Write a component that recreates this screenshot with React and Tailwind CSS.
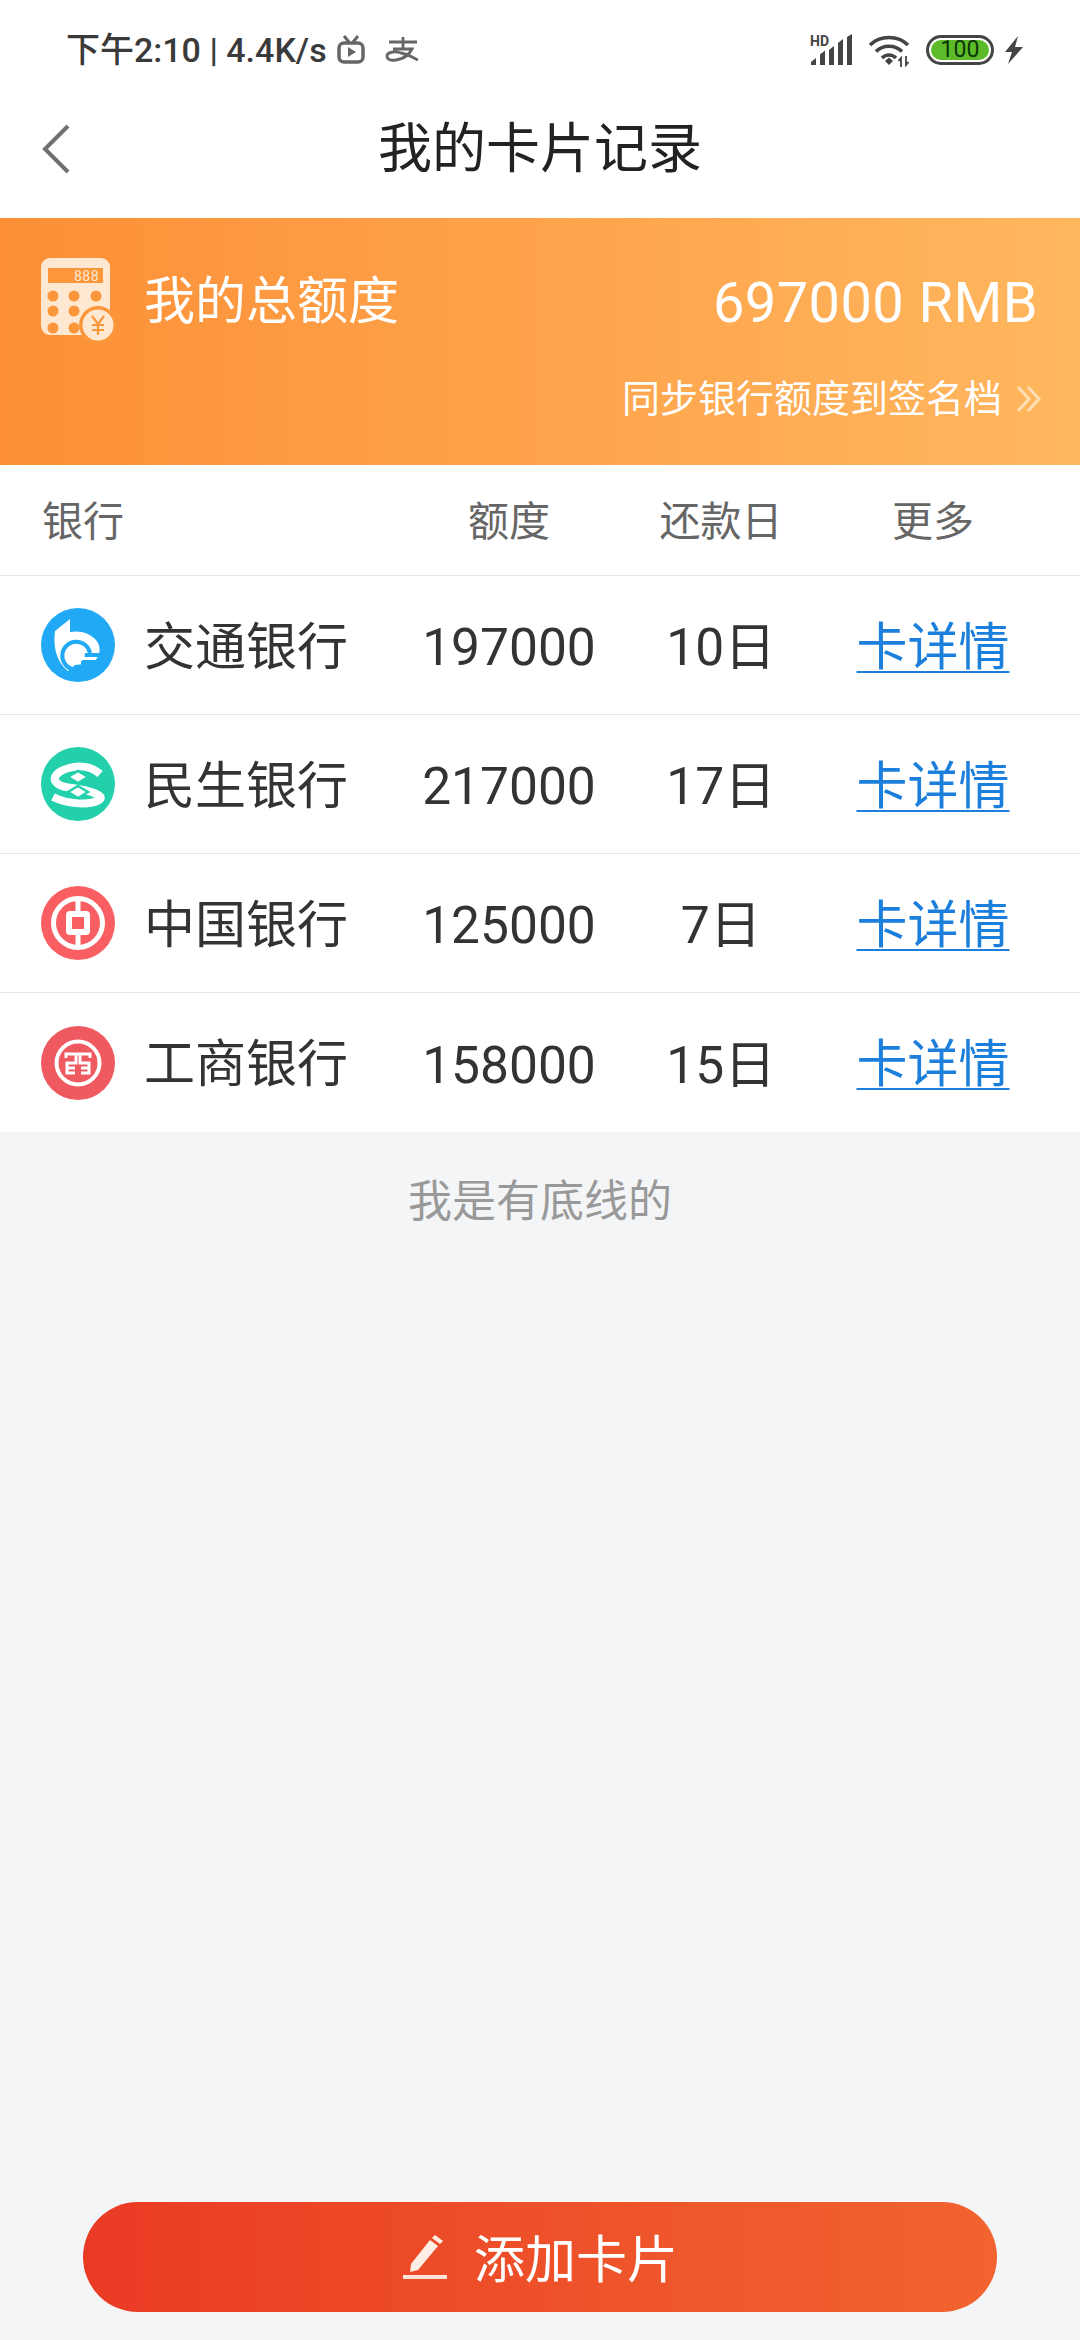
import React from "react";

function StatusRight() {
  return (
    <div className="flex items-center">
      <svg width="44" height="32" viewBox="0 0 44 32">
        <text x="0" y="12" fontSize="14" fontWeight="700" fontFamily="Roboto" fill="#444">HD</text>
        <path d="M1 31v-3l5-4v7zM10 31V20.500l5-4V31zM19 31V16l5-4v19zM28 31V9l5-4v26zM37 31V3l5-3v31z" fill="#444" />
      </svg>
      <svg width="44" height="34" viewBox="0 0 44 34" className="ml-[14px]">
        <path d="M2 12C12 2 30 2 40 12M8 18.500C15 11.500 27 11.500 34 18.500M14 25C18 21 24 21 28 25" fill="none" stroke="#444" strokeWidth="3.500" />
        <path d="M17 28l4-3.500 4 3.500-4 4z" fill="#444" />
        <path d="M33 34v-9l-2.500 3M38 23v9l2.500-3" fill="none" stroke="#444" strokeWidth="1.800" />
      </svg>
      <div className="ml-[14px] w-[68px] h-[30px] rounded-full border-[3px] border-[#444] p-[2px] flex">
        <div className="flex-1 rounded-full bg-[#5dbb2a] flex items-center justify-center text-[23px] leading-none text-[#0b3608] font-[Roboto]">100</div>
      </div>
      <svg width="20" height="30" viewBox="0 0 20 30" className="ml-[10px]">
        <path d="M14 1L1 17h7L4 29 19 12h-8z" fill="#444" />
      </svg>
    </div>
  );
}

function TvIcon() {
  return (
    <svg width="28" height="30" viewBox="0 0 28 30">
      <path d="M7 1l5 6M21 1l-5 6" stroke="#666" strokeWidth="3" fill="none" />
      <rect x="2" y="8" width="24" height="19" rx="5" fill="none" stroke="#666" strokeWidth="3.500" />
      <path d="M11 12l8 5-8 5z" fill="#666" />
    </svg>
  );
}

function CalcIcon() {
  const dots = [
    [14, 38], [35, 38], [57, 38],
    [14, 53], [35, 53],
    [14, 70], [35, 70],
  ];
  return (
    <svg width="78" height="86" viewBox="0 0 78 86">
      <rect x="2" y="0" width="69" height="77" rx="9" fill="#ffe8d2" />
      <rect x="9" y="10" width="55" height="15" fill="#fc963b" />
      <text x="35" y="23" fontSize="14" fontFamily="Roboto" fill="#ffe8d2" letterSpacing="0.5">888</text>
      {dots.map(([x, y]) => (
        <circle key={x + "-" + y} cx={x} cy={y} r="5.500" fill="#fc963b" />
      ))}
      <circle cx="59" cy="67" r="19" fill="#fc963b" />
      <circle cx="59" cy="67" r="15.500" fill="#ffe8d2" />
      <path d="M53 58l6 8 6-8M59 66v11M53 67h12M53 72h12" fill="none" stroke="#fc963b" strokeWidth="2.200" />
    </svg>
  );
}

function BocomIcon() {
  return (
    <svg width="74" height="74" viewBox="0 0 74 74">
      <circle cx="37" cy="37" r="37" fill="#22a9f5" />
      <path d="M29 11L14 23C12 38 15 54 27 63L40 60L54 53C60 46 60 38 55 32C49 25 39 22 29 24Z" fill="#fff" />
      <path d="M27 63L34 57L44 56L54 52L50 66L30 68Z" fill="#22a9f5" />
      <path d="M31 61A14 14 0 1 1 49 45" fill="none" stroke="#22a9f5" strokeWidth="4" />
      <rect x="40" y="45" width="18" height="4" fill="#22a9f5" />
      <rect x="40" y="52" width="16" height="5" fill="#22a9f5" />
      <circle cx="35" cy="46" r="9" fill="#fff" />
      <rect x="40" y="49" width="13" height="3" fill="#fff" />
    </svg>
  );
}

function CmbcIcon() {
  return (
    <svg width="74" height="74" viewBox="0 0 74 74">
      <circle cx="37" cy="37" r="37" fill="#22d1ac" />
      <path d="M59 27C50 19 38 18 28 21C17 24 11 30 15 35C20 42 34 40 47 44C57 47 63 50 58 53C50 58 28 58 12 50" fill="none" stroke="#fff" strokeWidth="8" />
      <path d="M37 24l10 6-10 6-10-6zM37 39l10 6-10 6-10-6z" fill="#fff" stroke="#22d1ac" strokeWidth="2.500" />
    </svg>
  );
}

function BocIcon() {
  return (
    <svg width="74" height="74" viewBox="0 0 74 74">
      <circle cx="37" cy="37" r="37" fill="#f95f62" />
      <circle cx="37" cy="37" r="24.500" fill="none" stroke="#fff" strokeWidth="5" />
      <rect x="28" y="28" width="18" height="18" rx="1" fill="none" stroke="#fff" strokeWidth="6" />
      <path d="M37 12v13M37 49v13" stroke="#fff" strokeWidth="5" />
    </svg>
  );
}

function IcbcIcon() {
  return (
    <svg width="74" height="74" viewBox="0 0 74 74">
      <circle cx="37" cy="37" r="37" fill="#ee5a60" />
      <circle cx="37" cy="37" r="21.500" fill="none" stroke="#fff" strokeWidth="4" />
      <path d="M25 32v-4h24v4M35 28v9H26v10h8M39 28v9h9v10h-8M26 42h8M40 42h8" fill="none" stroke="#fff" strokeWidth="3" />
    </svg>
  );
}

const rows = [
  { name: "交通银行", amount: "197000", day: "10日", Icon: BocomIcon },
  { name: "民生银行", amount: "217000", day: "17日", Icon: CmbcIcon },
  { name: "中国银行", amount: "125000", day: "7日", Icon: BocIcon },
  { name: "工商银行", amount: "158000", day: "15日", Icon: IcbcIcon },
];

export default function App() {
  return (
    <div className="w-[1080px] h-[2340px] bg-[#f4f5f7] flex flex-col font-['Roboto','Noto_Sans_CJK_SC',sans-serif] overflow-hidden">
      <div className="bg-white h-[218px] flex flex-col">
        <div className="h-[92px] pt-[7px] pl-[66px] pr-[56px] flex items-center justify-between">
          <div className="flex items-center text-[#3a3a3a] text-[34px] leading-none font-medium">
            <span>下午2:10 | 4.4K/s</span>
            <span className="ml-[10px] flex"><TvIcon /></span>
            <svg width="36" height="28" viewBox="0 0 36 28" className="ml-[20px]">
              <path d="M4 6h28M18 1v12M8 13h19c-3 6-9 10-16 11-6 1-9-1-9-4 0-4 8-5 14-3 6 1 11 4 17 7" fill="none" stroke="#666" strokeWidth="2.800" />
            </svg>
          </div>
          <StatusRight />
        </div>
        <div className="relative h-[126px] pb-[10px] flex items-center justify-center">
          <svg width="30" height="50" viewBox="0 0 30 50" className="absolute left-[42px] top-[32px]">
            <path d="M26 2L3 25l23 23" fill="none" stroke="#707070" strokeWidth="4" />
          </svg>
          <h1 className="text-[54px] leading-none text-[#222] font-normal">我的卡片记录</h1>
        </div>
      </div>

      <div className="h-[247px] pl-[39px] pr-[42px] pt-[40px] bg-gradient-to-r from-[#fc8f36] to-[#ffb75e] text-white">
        <div className="flex items-center justify-between h-[86px]">
          <div className="flex items-center">
            <CalcIcon />
            <span className="ml-[27px] text-[51px] leading-none">我的总额度</span>
          </div>
          <span className="text-[56px] leading-none mt-[4px] tracking-[0.4px]">697000 RMB</span>
        </div>
        <div className="flex justify-end items-center mt-[36px] mr-[-4px]">
          <span className="text-[38px] leading-none">同步银行额度到签名档</span>
          <svg width="26" height="28" viewBox="0 0 26 28" className="ml-[14px]">
            <path d="M2 2l11 12L2 26M12 2l11 12-11 12" fill="none" stroke="#ffe0b5" strokeWidth="3" />
          </svg>
        </div>
      </div>

      <div className="bg-white">
        <div className="h-[111px] pl-[42px] pr-[41px] flex items-center border-b border-[#e8e8e8] text-[41px] text-[#666]">
          <span className="flex-1 pt-[6px]">银行</span>
          <span className="w-[212px] text-center pt-[6px]">额度</span>
          <span className="w-[212px] text-center pt-[6px]">还款日</span>
          <span className="w-[212px] text-center pt-[6px]">更多</span>
        </div>
        {rows.map(({ name, amount, day, Icon }, i) => (
          <div key={name} className={"h-[139px] pl-[41px] pr-[41px] flex items-center text-[#333] text-[51px] " + (i < 3 ? "border-b border-[#e8e8e8]" : "")}>
            <div className="flex-1 flex items-center">
              <Icon />
              <span className="ml-[29px] pt-[6px]">{name}</span>
            </div>
            <span className="w-[212px] text-center text-[51.500px] pt-[6px]">{amount}</span>
            <span className="w-[212px] text-center text-[51.500px] pt-[6px]">{day}</span>
            <span className="w-[212px] text-center pt-[6px]">
              <span className="text-[#1b7fdb] underline underline-offset-[6px] decoration-[2px]">卡详情</span>
            </span>
          </div>
        ))}
      </div>

      <div className="h-[140px] flex items-center justify-center text-[44px] text-[#999]">我是有底线的</div>

      <div className="flex-1 flex flex-col justify-end items-center pb-[28px]">
        <div className="w-[914px] h-[110px] rounded-full bg-gradient-to-r from-[#ea3a24] to-[#f1632f] flex items-center justify-center text-white text-[51px]">
          <svg width="46" height="46" viewBox="0 0 46 46">
            <path d="M9 30L28 6l8 6L16 36l-8 2z" fill="#ffeee6" />
            <path d="M30 4l3-3 8 6-3 3z" fill="#ffeee6" />
            <path d="M1 43h44" stroke="#ffe4d8" strokeWidth="4" />
          </svg>
          <span className="ml-[26px] leading-none pt-[6px]">添加卡片</span>
        </div>
      </div>
    </div>
  );
}
